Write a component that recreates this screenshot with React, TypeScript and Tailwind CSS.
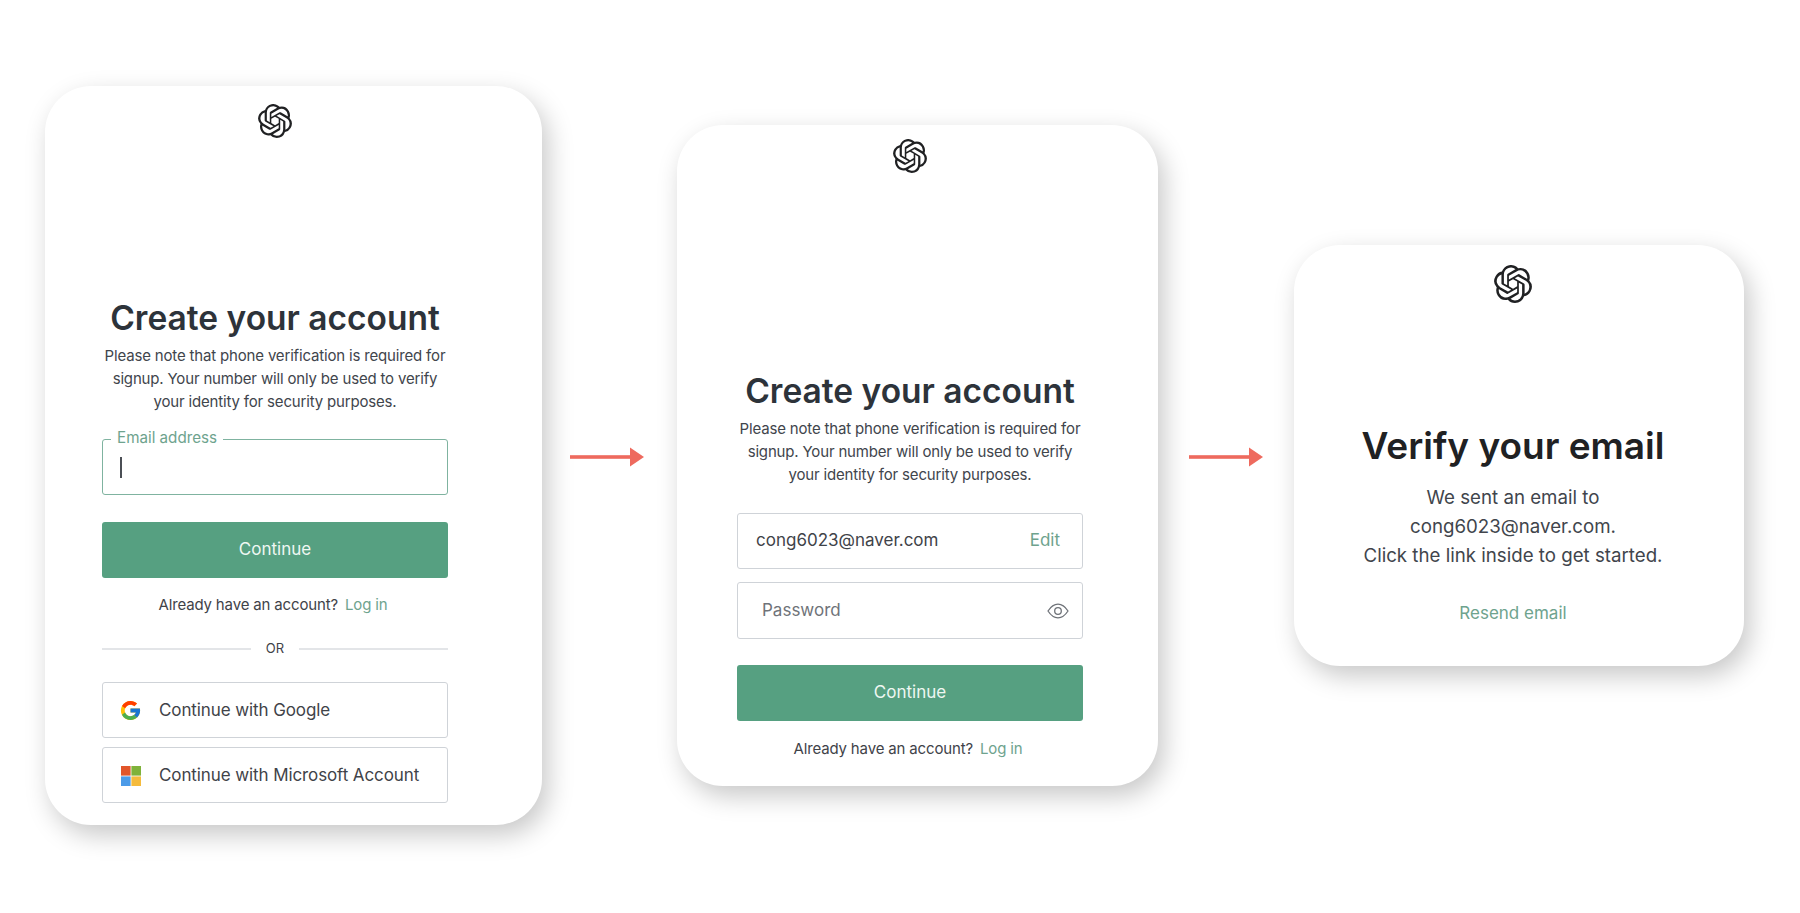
import React from "react";
import { SiOpenai } from "react-icons/si";
import { FcGoogle } from "react-icons/fc";

function Arrow({ className }: { className: string }) {
  return (
    <svg width="74" height="20" viewBox="0 0 74 20" className={className}>
      <rect x="0" y="8.2" width="62" height="3.6" fill="#ee6a5e" />
      <polygon points="60,0.5 74,10 60,19.5" fill="#ee6a5e" />
    </svg>
  );
}

function Heading() {
  return (
    <h1 className="w-full text-center text-[33.5px] leading-[40px] font-semibold text-[#2d333a] whitespace-nowrap">
      Create your account
    </h1>
  );
}

function Intro() {
  return (
    <p className="mt-[6px] w-full text-center text-[15px] leading-[23px] tracking-[-0.17px] text-[#41454c] whitespace-nowrap">
      Please note that phone verification is required for
      <br />
      signup. Your number will only be used to verify
      <br />
      your identity for security purposes.
    </p>
  );
}

function ContinueButton({ className }: { className: string }) {
  return (
    <button className={`flex h-[56px] w-full items-center justify-center rounded-[3px] bg-[#56a081] text-[17px] text-[#eef7f2] ${className}`}>
      Continue
    </button>
  );
}

function LoginLine({ className }: { className: string }) {
  return (
    <p className={`flex h-[20px] items-center justify-center pr-[4px] text-[15px] tracking-[-0.15px] text-[#3f4349] ${className}`}>
      Already have an account?
      <span className="ml-[7px] text-[#6ea38e]">Log in</span>
    </p>
  );
}

function Field({ className, children }: { className: string; children: React.ReactNode }) {
  return (
    <div className={`flex h-[56px] w-full items-center rounded-[3px] border border-[#cfd3d8] bg-white ${className}`}>
      {children}
    </div>
  );
}

function MicrosoftMark() {
  return (
    <svg width="20" height="20" viewBox="0 0 20 20">
      <rect x="0" y="0" width="9.6" height="9.6" fill="#e2562a" />
      <rect x="10.4" y="0" width="9.6" height="9.6" fill="#7fb23a" />
      <rect x="0" y="10.4" width="9.6" height="9.6" fill="#4c9be8" />
      <rect x="10.4" y="10.4" width="9.6" height="9.6" fill="#f5bb3d" />
    </svg>
  );
}

function EyeIcon() {
  return (
    <svg width="22" height="16" viewBox="0 0 22 16" fill="none" stroke="#6e7278" strokeWidth="1.3">
      <path d="M1 8 C4 3.4 7.4 1.2 11 1.2 C14.6 1.2 18 3.4 21 8 C18 12.6 14.6 14.8 11 14.8 C7.4 14.8 4 12.6 1 8 Z" />
      <circle cx="11" cy="8" r="3.3" />
    </svg>
  );
}

const card = "shrink-0 rounded-[46px] bg-white shadow-[6px_10px_26px_rgba(0,0,0,0.22)] flex flex-col";

export default function App() {
  return (
    <div className="flex h-[913px] w-[1800px] items-center bg-white pb-[2px] pl-[45px] font-[Inter,sans-serif]">
      <section className={`${card} h-[739px] w-[497px] pl-[57px] pr-[94px] pt-[18px]`}>
        <SiOpenai className="mx-auto h-[34px] w-[34px] shrink-0 text-[#202123]" />
        <div className="mt-[160px]"><Heading /></div>
        <Intro />
        <div className="relative mt-[26px]">
          <div className="flex h-[56px] w-full items-center rounded-[3px] border border-[#7fb3a0] pl-[17px]">
            <span className="h-[21px] w-[2px] bg-[#4b4f55]" />
          </div>
          <span className="absolute left-[9px] top-[-11px] bg-white px-[6px] text-[15.2px] leading-[20px] text-[#6ea38e]">
            Email address
          </span>
        </div>
        <ContinueButton className="mt-[27px]" />
        <LoginLine className="mt-[17px]" />
        <div className="mt-[24px] flex h-[20px] items-center gap-[15px]">
          <span className="h-[2px] flex-1 bg-[#e3e5e8]" />
          <span className="text-[13px] text-[#3f4349]">OR</span>
          <span className="h-[2px] flex-1 bg-[#e3e5e8]" />
        </div>
        <Field className="mt-[23px] pl-[16px] pt-[1px] text-[17px] tracking-[-0.1px] text-[#3f4349]">
          <FcGoogle className="h-[23px] w-[23px] shrink-0" />
          <span className="ml-[17px]">Continue with Google</span>
        </Field>
        <Field className="mt-[9px] pl-[18px] pt-[1px] text-[17px] tracking-[-0.1px] text-[#3f4349]">
          <MicrosoftMark />
          <span className="ml-[18px]">Continue with Microsoft Account</span>
        </Field>
      </section>

      <Arrow className="ml-[28px] mt-[2px] shrink-0" />

      <section className={`${card} ml-[33px] h-[661px] w-[481px] pl-[60px] pr-[75px] pt-[14px]`}>
        <SiOpenai className="mx-auto h-[34px] w-[34px] shrink-0 text-[#202123]" />
        <div className="mt-[198px]"><Heading /></div>
        <Intro />
        <Field className="mt-[27px] justify-between pl-[18px] pr-[22px] text-[17px] text-[#3f4349]">
          <span>cong6023@naver.com</span>
          <span className="text-[#6ea38e]">Edit</span>
        </Field>
        <Field className="mt-[13px] h-[57px] justify-between pl-[24px] pr-[13px] pt-[1px] text-[17px] text-[#6f7379]">
          <span>Password</span>
          <EyeIcon />
        </Field>
        <ContinueButton className="mt-[26px]" />
        <LoginLine className="mt-[18px]" />
      </section>

      <Arrow className="ml-[31px] mt-[2px] shrink-0" />

      <section className={`${card} ml-[31px] h-[421px] w-[450px] items-center pr-[12px] pt-[20px]`}>
        <SiOpenai className="h-[38px] w-[38px] shrink-0 text-[#202123]" />
        <h1 className="mt-[123px] text-[37px] leading-[40px] font-semibold text-[#202123] whitespace-nowrap">
          Verify your email
        </h1>
        <p className="mt-[17px] text-center text-[18.7px] leading-[29px] text-[#41454c] whitespace-nowrap">
          We sent an email to
          <br />
          cong6023@naver.com.
          <br />
          Click the link inside to get started.
        </p>
        <span className="mt-[31px] text-[17px] leading-[24px] text-[#6ea38e]">Resend email</span>
      </section>
    </div>
  );
}
